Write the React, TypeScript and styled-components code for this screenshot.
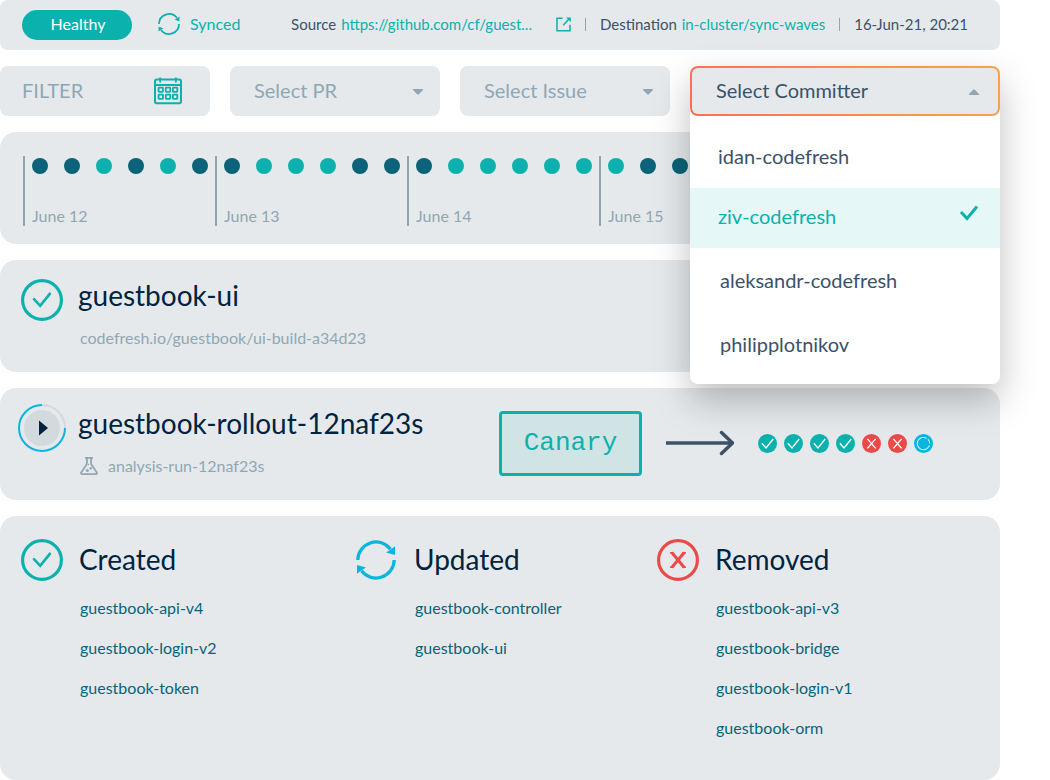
import React from "react";
import styled, { createGlobalStyle } from "styled-components";

const c = {
  panel: "#e5e9ec",
  teal: "#0bb1ad",
  deep: "#0a6378",
  navy: "#00233f",
  slate: "#3b5268",
  muted: "#90a7b3",
  cyan: "#0ab6de",
  red: "#ec4a49",
};

const GlobalStyle = createGlobalStyle`
  *, *::before, *::after { box-sizing: border-box; }
  body { margin: 0; background: #fff; font-family: Lato, sans-serif; color: ${c.slate}; font-size: 16px; line-height: 24px; }
  ul, h2, p { margin: 0; padding: 0; list-style: none; font-weight: 400; }
  button, input, select { font: inherit; color: inherit; border: 0; background: none; margin: 0; padding: 0; }
  a { color: inherit; text-decoration: none; }
  svg { display: block; flex: none; }
`;

const Page = styled.main`
  display: flex;
  flex-direction: column;
  gap: 16px;
  padding-right: 50px;
`;

/* Status bar */
const StatusBar = styled.header`
  display: flex;
  align-items: center;
  justify-content: space-between;
  min-height: 50px;
  padding: 0 32px 0 22px;
  background: ${c.panel};
  border-radius: 8px;
  white-space: nowrap;
`;
const StatusGroup = styled.div`
  display: flex;
  align-items: center;
`;
const Details = styled(StatusGroup)`
  padding-bottom: 2px;
  font-size: 15px;
`;
const Pill = styled.span`
  width: 110px;
  line-height: 28px;
  padding: 0 0 2px 2px;
  margin-right: 26px;
  border-radius: 15px;
  background: ${c.teal};
  color: #fff;
  text-align: center;
`;
const Synced = styled.span`
  display: flex;
  align-items: center;
  gap: 10px;
  padding-bottom: 2px;
  color: ${c.teal};
`;
const TealLink = styled.a`
  color: ${c.teal};
  margin-left: 5px;
`;
const OpenLink = styled.a`
  color: ${c.teal};
  margin-left: 24px;
`;
const Separator = styled.span`
  width: 1px;
  height: 13px;
  margin: 0 14px;
  background: ${c.muted};
`;

/* Filters */
const Filters = styled.div`
  display: grid;
  grid-template-columns: repeat(3, minmax(0, 21fr)) minmax(0, 31fr);
  gap: 20px;
  font-size: 20px;
`;
const FilterField = styled.label`
  display: flex;
  align-items: center;
  height: 50px;
  padding: 0 28px 0 22px;
  background: ${c.panel};
  border-radius: 8px;
`;
const FilterInput = styled.input`
  flex: 1;
  min-width: 0;
  padding-bottom: 2px;
  color: ${c.muted};
  &::placeholder { color: ${c.muted}; opacity: 1; }
`;
const IconButton = styled.button`
  color: ${c.teal};
`;
const SelectField = styled.label`
  display: grid;
  align-items: center;
  height: 50px;
  background: ${c.panel};
  border-radius: 8px;
  color: ${c.muted};
  & > * { grid-area: 1 / 1; }
  & > svg { justify-self: end; margin: 2px 16px 0 0; pointer-events: none; }
`;
const Select = styled.select`
  appearance: none;
  width: 100%;
  height: 50px;
  padding: 0 40px 2px 24px;
`;
const Picker = styled.div`
  position: relative;
  z-index: 2;
`;
const PickerButton = styled.button`
  position: relative;
  z-index: 1;
  display: flex;
  align-items: center;
  justify-content: space-between;
  width: 100%;
  height: 50px;
  padding: 0 18px 2px 24px;
  border: 2px solid transparent;
  border-radius: 8px;
  background:
    linear-gradient(${c.panel}, ${c.panel}) padding-box,
    linear-gradient(75deg, #fb6d5c, #f6845a 40%, #f2994a 70%, #f2a355) border-box;
  & > svg { color: ${c.muted}; margin-top: 4px; }
`;
const Menu = styled.ul`
  position: absolute;
  inset: 0 0 auto 0;
  padding: 62px 0 8px;
  background: #fff;
  border-radius: 8px;
  box-shadow: 0 16px 36px rgba(0, 0, 0, 0.25);
`;
const Option = styled.li<{ $selected?: boolean }>`
  display: flex;
  align-items: center;
  justify-content: space-between;
  height: 60px;
  padding: 0 21px 4px 28px;
  ${(p) => p.$selected && `background: #e5f7f7; color: ${c.teal};`}
  & > svg { margin-bottom: 6px; }
  &:nth-child(n + 3) { height: 64px; padding: 0 21px 0 30px; }
`;

/* Panels */
const Panel = styled.section`
  background: ${c.panel};
  border-radius: 16px;
`;
const Timeline = styled(Panel)`
  display: flex;
  height: 112px;
  padding: 24px 0 18px 23px;
  overflow: hidden;
`;
const Day = styled.div`
  display: flex;
  flex-direction: column;
  justify-content: space-between;
  flex: none;
  width: 192px;
  border-left: 2px solid ${c.muted};
  padding: 2px 0 0 7px;
  color: ${c.muted};
  line-height: 20px;
`;
const Dots = styled.div`
  display: flex;
  gap: 16px;
`;
const Dot = styled.span<{ $dark: boolean }>`
  width: 16px;
  height: 16px;
  border-radius: 50%;
  background: ${(p) => (p.$dark ? c.deep : c.teal)};
`;

const Title = styled.h2`
  color: ${c.navy};
  font-size: 28px;
  line-height: 36px;
`;
const Resource = styled(Panel)`
  display: flex;
  align-items: center;
  justify-content: space-between;
  min-height: 112px;
  padding: 0 67px 0 18px;
`;
const ResourceInfo = styled.div`
  display: grid;
  grid-template-columns: 48px auto;
  grid-template-rows: 48px 28px;
  column-gap: 12px;
  align-items: center;
  justify-items: start;
  padding-bottom: 4px;
  & > svg { justify-self: center; }
  ${Title} { padding-bottom: 10px; }
`;
const Meta = styled.p`
  grid-column: 2;
  display: flex;
  align-items: center;
  gap: 10px;
  padding-left: 2px;
  color: ${c.muted};
`;
const Rollout = styled.div`
  display: flex;
  align-items: center;
  gap: 24px;
  padding-bottom: 2px;
`;
const Strategy = styled.span`
  width: 143px;
  border: 3px solid ${c.teal};
  border-radius: 4px;
  background: #d0e4e5;
  color: ${c.teal};
  font-family: "Liberation Mono", monospace;
  font-size: 26px;
  line-height: 59px;
  text-align: center;
`;
const Steps = styled.div`
  display: flex;
  gap: 7px;
`;

const Changes = styled(Panel)`
  display: grid;
  grid-template-columns: 335fr 301fr 343fr;
  padding: 23px 0 32px 21px;
`;
const ChangeHead = styled.div`
  display: grid;
  grid-template-columns: 42px auto;
  column-gap: 16px;
  align-items: center;
  justify-items: start;
  height: 42px;
  margin-bottom: 7px;
  ${Title} { padding-bottom: 2px; }
`;
const ChangeList = styled.ul`
  padding-left: 59px;
  color: ${c.deep};
  line-height: 40px;
`;

/* Icons */
const SyncIcon = ({ size, color }: { size: number; color: string }) => (
  <svg width={size} height={size} viewBox="0 0 40 40" fill="none" stroke={color} strokeWidth="3.2" aria-hidden="true">
    <path d="M1.8 20A18.2 18.2 0 0 1 34.5 9.2M38.2 20A18.2 18.2 0 0 1 5.5 30.8" />
    <path d="M39 6.2V15l-9-2.6 4-2.4ZM1 33.8V25l9 2.6-4 2.4Z" fill={color} stroke="none" />
  </svg>
);
const CheckCircle = () => (
  <svg width="42" height="42" viewBox="0 0 42 42" fill="none" stroke={c.teal} aria-hidden="true">
    <circle cx="21" cy="21" r="19.4" strokeWidth="3.2" />
    <path d="m13 20.2 6.2 6.6 9.6-12" strokeWidth="2.7" strokeLinecap="round" />
  </svg>
);
const CrossCircle = () => (
  <svg width="42" height="42" viewBox="0 0 42 42" fill="none" stroke={c.red} aria-hidden="true">
    <circle cx="21" cy="21" r="19.4" strokeWidth="3.2" />
    <path d="m14.8 13.5 12.4 15M27.2 13.5l-12.4 15" strokeWidth="3" />
    <path d="M13 13.7h3.5M25.5 13.7H29M13 28.3h3.5M25.5 28.3H29" strokeWidth="1.4" />
  </svg>
);
const PlayIcon = () => (
  <svg width="48" height="48" viewBox="0 0 48 48" fill="none" aria-hidden="true">
    <circle cx="24" cy="24" r="18" fill="#d2dadd" />
    <path d="M24 1a23 23 0 0 1 23 23" stroke="#d2dadd" strokeWidth="2" />
    <path d="M47 24A23 23 0 1 1 24 1" stroke={c.cyan} strokeWidth="2" />
    <path d="M21 16.5v15l9-7.5Z" fill={c.navy} />
  </svg>
);
const FlaskIcon = () => (
  <svg width="18" height="18" viewBox="0 0 18 18" fill="none" stroke={c.muted} strokeWidth="1.8" aria-hidden="true">
    <path d="M5 .9h8M6.9 1v6L1.2 15.5c-.5.9-.1 1.6.9 1.6h13.8c1 0 1.4-.7.9-1.6L11.1 7V1" />
    <circle cx="7.4" cy="13.4" r="1.5" fill={c.muted} stroke="none" />
    <circle cx="10.8" cy="11.3" r="1.2" fill={c.muted} stroke="none" />
    <circle cx="8.5" cy="7.5" r=".7" fill={c.muted} stroke="none" />
  </svg>
);
const CalendarIcon = () => (
  <svg width="28" height="28" viewBox="0 0 28 28" fill="none" stroke="currentColor" aria-hidden="true">
    <rect x="1" y="2.6" width="26" height="23.6" rx="1.6" strokeWidth="2" />
    <path d="M1 8h26" strokeWidth="2" />
    <path d="M6.2.6v5M21.8.6v5" strokeWidth="1.8" />
    {[10.6, 17.6].map((y) =>
      [4.6, 11.8, 18.9].map((x) => <rect key={`${x}-${y}`} x={x} y={y} width="4.4" height="4.2" rx=".5" strokeWidth="1.8" />)
    )}
  </svg>
);
const ExternalIcon = () => (
  <svg width="15" height="15" viewBox="0 0 15 15" fill="none" stroke="currentColor" strokeWidth="1.5" aria-hidden="true">
    <path d="M6.5 1.2H1v12.6h13V7.8M7.2 8.2 13 2" />
    <path d="M10 .5h4.8v4.6Z" fill="currentColor" stroke="none" />
  </svg>
);
const Caret = ({ up }: { up?: boolean }) => (
  <svg width="12" height="8" viewBox="0 0 12 8" fill="currentColor" aria-hidden="true">
    <path d={up ? "M6 1 11 6Q11.4 7 10.4 7H1.6Q.6 7 1 6Z" : "M6 7 1 2Q.6 1 1.6 1h8.8Q11.4 1 11 2Z"} />
  </svg>
);
const MenuCheck = () => (
  <svg width="20" height="16" viewBox="0 0 20 16" fill="none" stroke={c.teal} strokeWidth="3" aria-hidden="true">
    <path d="m2 7 6 6.5L18 1.5" />
  </svg>
);
const ArrowIcon = () => (
  <svg width="68" height="26" viewBox="0 0 68 26" fill="none" stroke={c.slate} aria-hidden="true">
    <path d="M0 13h66" strokeWidth="3.4" />
    <path d="m55.5 2.5 11 10.5-11 10.5" strokeWidth="3.4" strokeLinecap="round" />
  </svg>
);
type StepKind = "ok" | "fail" | "running";
const StepIcon = ({ kind }: { kind: StepKind }) => (
  <svg width="19" height="19" viewBox="0 0 19 19" fill="none" stroke="#fff" strokeWidth="1.3" aria-label={kind} role="img">
    <circle cx="9.5" cy="9.5" r="9.5" stroke="none" fill={kind === "ok" ? c.teal : kind === "fail" ? c.red : c.cyan} />
    {kind === "ok" && <path d="m3.8 9.2 4.2 4.8 7.2-9" />}
    {kind === "fail" && <path d="m5.4 4.8 8.2 9.6M13.6 4.8l-8.2 9.6" />}
    {kind === "running" && <path d="M12.6 4.2A6.2 6.2 0 1 0 15.4 11.4M14 5.2A6.2 6.2 0 0 1 15.7 9.6" strokeWidth="1" />}
  </svg>
);

/* Data: d = dark dot, t = teal dot */
const days = [
  { label: "June 12", dots: "ddtdtd" },
  { label: "June 13", dots: "dtttdd" },
  { label: "June 14", dots: "dttttt" },
  { label: "June 15", dots: "tdd" },
];
const committers = ["idan-codefresh", "ziv-codefresh", "aleksandr-codefresh", "philipplotnikov"];
const steps: StepKind[] = ["ok", "ok", "ok", "ok", "fail", "fail", "running"];
const changes = [
  { title: "Created", icon: <CheckCircle />, items: ["guestbook-api-v4", "guestbook-login-v2", "guestbook-token"] },
  { title: "Updated", icon: <SyncIcon size={40} color={c.cyan} />, items: ["guestbook-controller", "guestbook-ui"] },
  { title: "Removed", icon: <CrossCircle />, items: ["guestbook-api-v3", "guestbook-bridge", "guestbook-login-v1", "guestbook-orm"] },
];

export default function App() {
  return (
    <>
      <GlobalStyle />
      <Page>
        <StatusBar>
          <StatusGroup>
            <Pill>Healthy</Pill>
            <Synced>
              <SyncIcon size={22} color={c.teal} />
              Synced
            </Synced>
          </StatusGroup>
          <Details>
            Source <TealLink href="#source">https://github.com/cf/guest...</TealLink>
            <OpenLink href="#source" aria-label="Open source">
              <ExternalIcon />
            </OpenLink>
            <Separator />
            Destination <TealLink href="#destination">in-cluster/sync-waves</TealLink>
            <Separator />
            <time>16-Jun-21, 20:21</time>
          </Details>
        </StatusBar>

        <Filters>
          <FilterField>
            <FilterInput type="text" placeholder="FILTER" aria-label="Filter" />
            <IconButton type="button" aria-label="Pick dates">
              <CalendarIcon />
            </IconButton>
          </FilterField>
          {["Select PR", "Select Issue"].map((text) => (
            <SelectField key={text}>
              <Select aria-label={text}>
                <option>{text}</option>
              </Select>
              <Caret />
            </SelectField>
          ))}
          <Picker>
            <PickerButton type="button" aria-haspopup="listbox" aria-expanded="true" aria-controls="committers">
              Select Committer
              <Caret up />
            </PickerButton>
            <Menu role="listbox" id="committers" aria-label="Committer">
              {committers.map((name) => {
                const selected = name === "ziv-codefresh";
                return (
                  <Option key={name} role="option" aria-selected={selected} $selected={selected}>
                    {name}
                    {selected && <MenuCheck />}
                  </Option>
                );
              })}
            </Menu>
          </Picker>
        </Filters>

        <Timeline>
          {days.map((day) => (
            <Day key={day.label}>
              <Dots>
                {[...day.dots].map((dot, i) => (
                  <Dot key={i} $dark={dot === "d"} />
                ))}
              </Dots>
              {day.label}
            </Day>
          ))}
        </Timeline>

        <Resource>
          <ResourceInfo>
            <CheckCircle />
            <Title>guestbook-ui</Title>
            <Meta>codefresh.io/guestbook/ui-build-a34d23</Meta>
          </ResourceInfo>
        </Resource>

        <Resource>
          <ResourceInfo>
            <PlayIcon />
            <Title>guestbook-rollout-12naf23s</Title>
            <Meta>
              <FlaskIcon />
              analysis-run-12naf23s
            </Meta>
          </ResourceInfo>
          <Rollout>
            <Strategy>Canary</Strategy>
            <ArrowIcon />
            <Steps>
              {steps.map((kind, i) => (
                <StepIcon key={i} kind={kind} />
              ))}
            </Steps>
          </Rollout>
        </Resource>

        <Changes>
          {changes.map(({ title, icon, items }) => (
            <div key={title}>
              <ChangeHead>
                {icon}
                <Title>{title}</Title>
              </ChangeHead>
              <ChangeList>
                {items.map((item) => (
                  <li key={item}>
                    <a href={`#${item}`}>{item}</a>
                  </li>
                ))}
              </ChangeList>
            </div>
          ))}
        </Changes>
      </Page>
    </>
  );
}
